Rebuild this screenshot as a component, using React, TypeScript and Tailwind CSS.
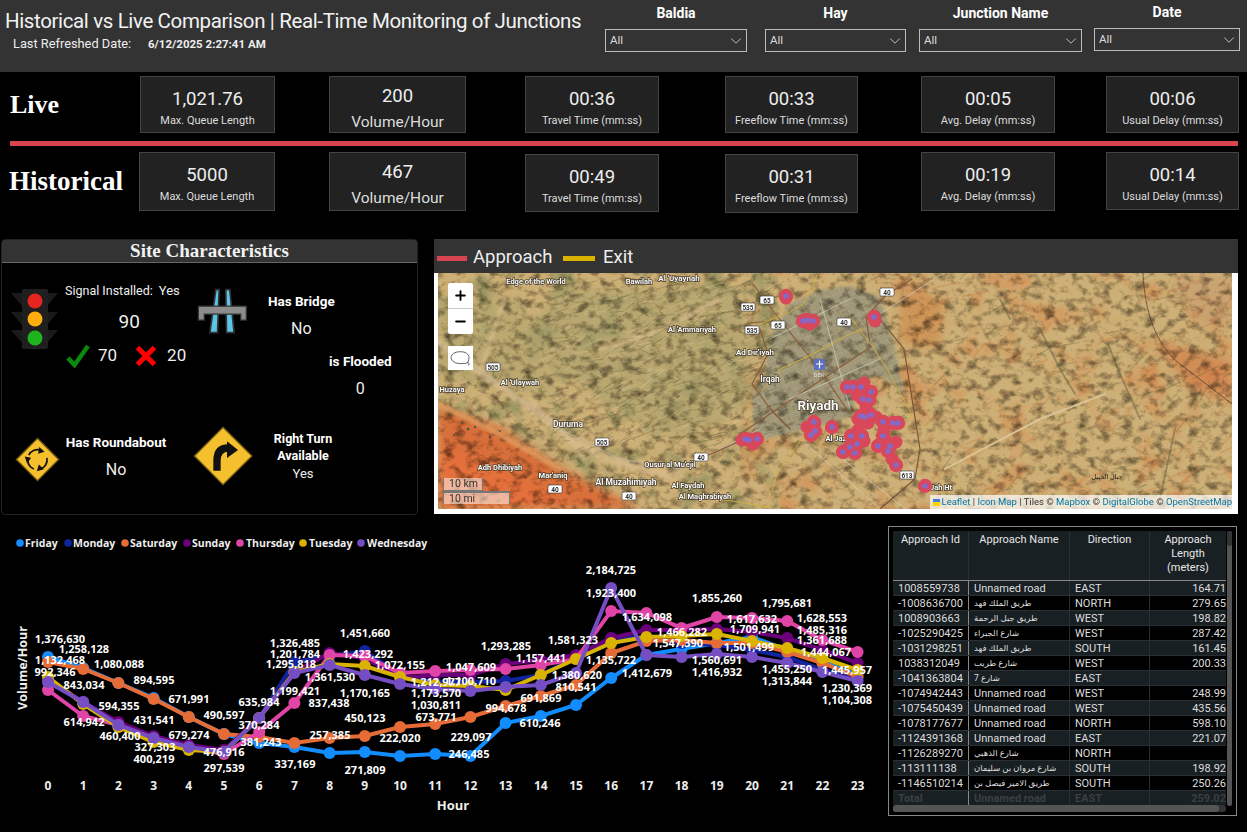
import React from 'react';
import { ChevronDown, Plus, Minus } from 'lucide-react';

const DAYS = [
  { name: 'Friday', color: '#118DFF', ys: [657, 668, 683, 698, 717, 734, 743, 747, 753, 752, 756, 754, 756, 723, 716, 705, 678, 655, 649, 643, 637, 650, 662, 675] },
  { name: 'Monday', color: '#12239E', ys: [682, 702, 725, 738, 747, 752, 718, 662, 656, 651, 675, 682, 682, 681, 675, 657, 638, 637, 643, 645, 650, 657, 670, 678] },
  { name: 'Saturday', color: '#E66C37', ys: [662, 669, 683, 699, 717, 734, 737, 743, 738, 736, 727, 724, 717, 706, 696, 685, 653, 641, 640, 643, 643, 652, 663, 677] },
  { name: 'Sunday', color: '#6B007B', ys: [680, 702, 722, 736, 745, 750, 718, 672, 653, 658, 678, 675, 675, 664, 660, 655, 638, 630, 630, 629, 632, 638, 650, 663] },
  { name: 'Thursday', color: '#E044A7', ys: [690, 716, 725, 740, 748, 754, 732, 703, 655, 656, 673, 671, 670, 669, 665, 659, 611, 613, 628, 617, 618, 621, 640, 652] },
  { name: 'Tuesday', color: '#D9B300', ys: [677, 704, 727, 742, 750, 752, 718, 672, 664, 666, 677, 685, 686, 690, 675, 659, 643, 637, 636, 634, 641, 648, 658, 670] },
  { name: 'Wednesday', color: '#744EC2', ys: [682, 702, 725, 738, 747, 752, 718, 673, 665, 675, 684, 689, 691, 687, 685, 673, 588, 655, 657, 654, 657, 663, 672, 681] },
];

const LEGEND_DOT = [20, 68, 125, 187, 240, 303, 361];
const LEGEND_TEXT = [25, 73, 130, 192, 246, 309, 367];

const LABELS: [string, number, number][] = [
  ['1,376,630', 60, 639], ['1,258,128', 84, 649], ['1,132,468', 60, 660], ['1,080,088', 119, 664], ['992,346', 55, 672],
  ['894,595', 154, 680], ['843,034', 84, 685], ['671,991', 189, 699], ['594,355', 119, 706], ['490,597', 224, 715],
  ['614,942', 84, 722], ['431,541', 154, 720], ['635,984', 259, 702], ['370,284', 259, 725], ['460,400', 120, 736],
  ['679,274', 189, 735], ['327,303', 155, 747], ['381,243', 261, 742], ['476,916', 224, 752], ['400,219', 154, 759],
  ['297,539', 224, 768], ['337,169', 295, 764], ['1,326,485', 295, 643], ['1,201,784', 295, 654], ['1,295,818', 291, 664],
  ['1,199,421', 295, 691], ['837,438', 329, 703], ['1,361,530', 330, 677], ['1,451,660', 365, 633], ['1,423,292', 368, 654],
  ['1,072,155', 400, 665], ['1,170,165', 365, 693], ['450,123', 365, 718], ['257,385', 330, 735], ['222,020', 400, 738],
  ['271,809', 365, 770], ['1,212,977', 436, 682], ['1,173,570', 436, 693], ['1,030,811', 436, 705], ['673,771', 436, 717],
  ['1,047,609', 471, 667], ['1,100,710', 471, 681], ['229,097', 471, 737], ['246,485', 469, 754], ['1,293,285', 506, 646],
  ['994,678', 506, 708], ['1,157,441', 541, 658], ['691,869', 541, 698], ['610,246', 540, 723], ['1,581,323', 573, 640],
  ['1,380,620', 577, 675], ['810,541', 576, 687], ['2,184,725', 611, 570], ['1,923,400', 611, 593], ['1,135,722', 611, 660],
  ['1,634,098', 647, 617], ['1,412,679', 647, 673], ['1,466,282', 682, 632], ['1,547,390', 678, 643], ['1,855,260', 717, 598],
  ['1,560,691', 717, 660], ['1,416,932', 717, 672], ['1,617,632', 752, 619], ['1,709,941', 755, 629], ['1,501,499', 749, 647],
  ['1,795,681', 787, 603], ['1,455,250', 787, 669], ['1,313,844', 787, 681], ['1,628,553', 822, 618], ['1,485,316', 822, 630],
  ['1,361,688', 822, 640], ['1,444,067', 826, 652], ['1,445,957', 847, 670], ['1,230,369', 847, 688], ['1,104,308', 847, 700],
];

const ROWS = [
  ['1008559738', 'Unnamed road', 'EAST', '164.71'],
  ['-1008636700', 'طريق الملك فهد', 'NORTH', '279.65'],
  ['1008903663', 'طريق جبل الرحمة', 'WEST', '198.82'],
  ['-1025290425', 'شارع الجبراء', 'WEST', '287.42'],
  ['-1031298251', 'طريق الملك فهد', 'SOUTH', '161.45'],
  ['1038312049', 'شارع طريب', 'WEST', '200.33'],
  ['-1041363804', 'شارع 7', 'EAST', ''],
  ['-1074942443', 'Unnamed road', 'WEST', '248.99'],
  ['-1075450439', 'Unnamed road', 'WEST', '435.56'],
  ['-1078177677', 'Unnamed road', 'NORTH', '598.10'],
  ['-1124391368', 'Unnamed road', 'EAST', '221.07'],
  ['-1126289270', 'شارع الذهبي', 'NORTH', ''],
  ['-113111138', 'شارع مروان بن سليمان', 'SOUTH', '198.92'],
  ['-1146510214', 'طريق الامير فيصل بن', 'SOUTH', '250.26'],
];

const MARKERS: [number, number][] = [
  [786, 297], [803, 322], [807, 321], [813, 322], [814, 423], [815, 432], [811, 436], [832, 428], [745, 440], [749, 441], [757, 440],
  [874, 318], [847, 388], [853, 388], [861, 388], [871, 393], [869, 401], [863, 400], [861, 417], [865, 418], [871, 416], [883, 423],
  [898, 424], [893, 424], [851, 437], [862, 437], [857, 445], [850, 448], [843, 453], [855, 454], [883, 437], [878, 447], [890, 447],
  [888, 452], [896, 466], [925, 487],
];

// red only, these fatten the clusters
const BLOBS: [number, number][] = [
  [858, 392], [866, 394], [864, 384], [857, 396], [866, 408], [858, 420], [876, 418], [868, 424], [858, 431], [856, 440], [864, 442],
  [852, 443], [884, 431], [886, 442], [896, 443], [892, 460], [742, 441], [753, 445], [810, 325], [875, 322], [786, 299], [807, 428],
];

const PLACES: [string, number, number, number][] = [
  ['Edge of the World', 536, 285, 7.5], ['Bawilah', 639, 285, 7.5], ["Al 'Uyaynah", 679, 282, 8], ["Al 'Ammariyah", 692, 333, 7.5],
  ["Ad Dir'iyah", 755, 356, 8], ['Irqah', 770, 383, 8.5], ["Al 'Ulaywah", 520, 386, 7.5], ['Huzaya', 452, 393, 7.5], ['Duruma', 568, 428, 8.5],
  ['Adh Dhibiyah', 500, 471, 7.5], ["Mar'aniq", 553, 479, 7.5], ['Al Muzahimiyah', 626, 486, 8.5], ['Al Faydah', 688, 489, 7.5],
  ['Al Maghrabiyah', 705, 500, 7.5], ["Qusur al Mu'ejil", 670, 468, 7.5], ['Al Jazah', 840, 442, 7.5], ['Jah Ht', 941, 491, 7.5],
];

const SHIELDS: [string, number, number][] = [
  ['535', 748, 308], ['65', 767, 301], ['535', 752, 331], ['65', 778, 326], ['505', 493, 368], ['505', 602, 443], ['40', 701, 458],
  ['40', 555, 490], ['40', 629, 497], ['40', 887, 293], ['40', 844, 323], ['613', 907, 476],
];

// deterministic drainage strokes for the terrain
const rnd = (seed: number) => {
  const v = Math.sin(seed * 127.1) * 43758.5453;
  return v - Math.floor(v);
};
const RIDGES = Array.from({ length: 420 }, (_, i) => {
  const x = 540 + rnd(i + 1) * 230;
  const y = 282 + rnd(i + 500) * 170;
  const len = 5 + rnd(i + 900) * 16;
  const a = -0.75 + rnd(i + 1300) * 0.7;
  return {
    d: `M${x.toFixed(1)} ${y.toFixed(1)}l${(Math.cos(a) * len).toFixed(1)} ${(Math.sin(a) * len).toFixed(1)}`,
    light: i % 3 === 0,
  };
});
const SPECKS = Array.from({ length: 120 }, (_, i) => ({
  x: 920 + rnd(i + 2000) * 310,
  y: 276 + rnd(i + 2400) * 232,
  w: 6 + rnd(i + 2800) * 22,
  a: -60 + rnd(i + 3200) * 50,
  dark: i % 3 === 0,
}));

const CITY = 'M773 330 L790 305 L820 291 L850 287 L880 298 L893 340 L904 395 L880 376 L862 380 L850 418 L800 432 L755 442 L752 400 L765 370 Z';

const SatelliteMap = () => (
  <svg viewBox="438 274 794 236" className="block w-full h-full" preserveAspectRatio="none">
    <defs>
      <filter id="grain" x="0" y="0" width="100%" height="100%" colorInterpolationFilters="sRGB">
        <feTurbulence type="fractalNoise" baseFrequency="0.09 0.12" numOctaves="6" seed="8" result="noise" />
        <feColorMatrix in="noise" type="matrix" values="0.85 0.85 0 0 0.1  0.85 0.85 0 0 0.09  0.85 0.85 0 0 0.07  0 0 0 0 1" result="grey" />
        <feBlend in="SourceGraphic" in2="grey" mode="multiply" />
      </filter>
      <filter id="orangePatches" x="0" y="0" width="100%" height="100%" colorInterpolationFilters="sRGB">
        <feTurbulence type="fractalNoise" baseFrequency="0.03" numOctaves="4" seed="21" />
        <feColorMatrix type="matrix" values="0 0 0 0 0.84  0 0 0 0 0.5  0 0 0 0 0.27  3.5 0 0 0 -1.8" />
      </filter>
      <filter id="olivePatches" x="0" y="0" width="100%" height="100%" colorInterpolationFilters="sRGB">
        <feTurbulence type="fractalNoise" baseFrequency="0.04" numOctaves="4" seed="5" />
        <feColorMatrix type="matrix" values="0 0 0 0 0.53  0 0 0 0 0.55  0 0 0 0 0.36  0 3.5 0 0 -1.7" />
      </filter>
      <filter id="soft"><feGaussianBlur stdDeviation="4" /></filter>
      <filter id="soft2"><feGaussianBlur stdDeviation="1.5" /></filter>
      <filter id="lens"><feGaussianBlur stdDeviation="0.35" /></filter>
      <pattern id="grid" width="8" height="7" patternUnits="userSpaceOnUse" patternTransform="rotate(-24)">
        <path d="M0 0H8M0 0V7" stroke="#d6d0c0" strokeWidth="0.45" fill="none" opacity="0.6" />
      </pattern>
    </defs>
    <g filter="url(#grain)">
      <rect x="438" y="274" width="794" height="236" fill="#CDB077" />
      <rect x="740" y="274" width="492" height="236" fill="#000" filter="url(#orangePatches)" opacity="0.55" />
      <rect x="438" y="274" width="340" height="236" fill="#000" filter="url(#olivePatches)" opacity="0.7" />
      <g filter="url(#soft)">
        <path d="M438 408 L500 428 L560 468 L640 510 L438 510 Z" fill="#D9703A" />
        <path d="M438 445 L520 475 L575 510 L438 510 Z" fill="#E4703A" />
        <path d="M560 290 L740 290 L760 400 L680 440 L600 400 L520 340 Z" fill="#ABA16E" opacity="0.6" />
        <path d="M438 300 L520 300 L560 400 L438 380 Z" fill="#B5A66F" opacity="0.7" />
        <path d="M1150 340 L1232 360 L1232 405 L1190 390 Z" fill="#D27F48" opacity="0.7" />
        <path d="M1170 276 L1232 276 L1232 330 L1195 320 Z" fill="#C9A070" opacity="0.8" />
        <path d="M900 290 L945 300 L940 350 L900 345 Z" fill="#CE8A4C" opacity="0.7" />
      </g>
      <path d={CITY} fill="#A09878" filter="url(#soft2)" />
    </g>
    <path d={CITY} fill="url(#grid)" />
    <g fill="none" strokeLinecap="round" filter="url(#lens)">
      <g filter="url(#soft2)">
        <path d="M438 342 C480 375 520 400 560 432 S640 470 680 478" stroke="#D8BC8C" strokeWidth="7" opacity="0.7" />
        <path d="M505 300 C495 325 490 345 480 372 M530 400 C550 420 570 440 585 460 M600 350 C650 340 680 320 720 300" stroke="#D8BC8C" strokeWidth="4" opacity="0.7" />
        <path d="M438 405 L490 430 L560 470" stroke="#E09A5C" strokeWidth="5" opacity="0.9" />
      </g>
      {RIDGES.map((r, i) => (
        <path key={i} d={r.d} stroke={r.light ? '#DFC896' : '#5F6039'} strokeWidth={r.light ? 0.9 : 0.8} opacity="0.42" />
      ))}
      {SPECKS.map((s, i) => (
        <rect key={i} x={s.x} y={s.y} width={s.w} height={s.dark ? 1 : 2.2} transform={`rotate(${s.a} ${s.x} ${s.y})`} fill={s.dark ? '#55603F' : '#C98048'} stroke="none" opacity="0.35" />
      ))}
      <g fill="#2F4F3C" stroke="none" opacity="0.8">
        <circle cx="468" cy="430" r="1.5" /><circle cx="475" cy="428" r="1.2" /><circle cx="462" cy="424" r="1" /><circle cx="490" cy="438" r="1.2" />
        <circle cx="454" cy="436" r="1" /><circle cx="500" cy="432" r="1" />
      </g>
      {/* highways */}
      <path d="M438 345 L500 385 L560 430 L620 460 L680 470 L760 430" stroke="#b9b3a4" strokeWidth="0.9" />
      <path d="M753 285 L770 308 L823 375 L850 415 M872 347 L830 375 L770 415 L740 435 M870 345 L866 318 L886 296 L912 280 M704 458 L745 440 M750 324 L772 322 M760 330 L768 355 L752 385 L772 412" stroke="#8a5a3c" strokeWidth="1.2" />
      <path d="M760 325 L790 313 L803 305 L812 288 L817 276 M775 378 L780 370 L807 358 L850 335 L863 330 M850 318 L873 348 L890 375 L910 412 L912 422 M772 492 L777 475 L803 438 M775 378 L762 392 M700 497 L770 508" stroke="#D4B23A" strokeWidth="0.9" />
      <path d="M805 444 L880 510 M830 450 L905 510 M880 315 L940 276 M905 460 L925 488 M770 340 L850 300 M790 400 L880 360 M820 300 L850 410" stroke="#d2cebf" strokeWidth="0.7" />
      <path d="M772 412 L790 430 M880 320 L904 350 L920 450 L915 480 L880 510" stroke="#7d5236" strokeWidth="1.2" />
      <path d="M945 470 L1040 420 L1105 395" stroke="#DCC79A" strokeWidth="2" opacity="0.9" />
      <path d="M1143 274 C1145 320 1160 350 1180 365 L1232 405" stroke="#3b3326" strokeWidth="0.7" strokeDasharray="3 1" />
      <path d="M1040 330 L1060 370 L1075 395 M1108 345 L1120 375 L1140 420 M1000 300 L1010 320 M1175 430 L1160 500" stroke="#56563A" strokeWidth="1.8" opacity="0.45" />
      <g className="font-semibold" textAnchor="middle" fill="#fff" stroke="#4a4030" strokeWidth="1.5" paintOrder="stroke">
        {PLACES.map(([t, x, y, s]) => (
          <text key={t} x={x} y={y} fontSize={s}>{t}</text>
        ))}
        <text x="818" y="411" fontSize="13.5">Riyadh</text>
      </g>
      <text x="1107" y="480" fontSize="6.5" textAnchor="middle" fill="#222" stroke="none">جبال الجبيل</text>
      {SHIELDS.map(([t, x, y], i) => (
        <g key={i}>
          <rect x={x - 7} y={y - 4} width="14" height="8" rx="1" fill="#fff" stroke="#333" strokeWidth="0.6" />
          <text x={x} y={y + 2.5} fontSize="6.5" fontWeight="700" textAnchor="middle" fill="#333" stroke="none">{t}</text>
        </g>
      ))}
      <rect x="814" y="360" width="11" height="11" rx="1" fill="#5b6fc0" stroke="none" />
      <path d="M819.5 362v7M816.5 365h6" stroke="#fff" strokeWidth="1.2" />
      <text x="819" y="378" fontSize="6" textAnchor="middle" fill="#ddd" stroke="none">DER</text>
      <g fill="#D9475A" stroke="none">
        {MARKERS.map(([x, y], i) => (
          <circle key={i} cx={x} cy={y} r="7.2" />
        ))}
        {BLOBS.map(([x, y], i) => (
          <circle key={i} cx={x} cy={y} r="6.5" />
        ))}
      </g>
      <g fill="#8469C9" stroke="none">
        {MARKERS.map(([x, y], i) => (
          <circle key={i} cx={x} cy={y} r="2.8" />
        ))}
      </g>
    </g>
  </svg>
);

const Chart = () => (
  <svg viewBox="0 525 885 307" className="block w-[885px] h-[307px] font-['Open_Sans',sans-serif]">
    {DAYS.map((d, k) => (
      <g key={d.name}>
        <circle cx={LEGEND_DOT[k]} cy="543" r="3.8" fill={d.color} />
        <text x={LEGEND_TEXT[k]} y="547" fontSize="10.5" fontWeight="700" fill="#eee">{d.name}</text>
      </g>
    ))}
    {DAYS.map((d) => (
      <g key={d.name}>
        <polyline fill="none" stroke={d.color} strokeWidth="4" points={d.ys.map((y, i) => `${48 + 35.2 * i},${y}`).join(' ')} />
        {d.ys.map((y, i) => (
          <circle key={i} cx={48 + 35.2 * i} cy={y} r="6" fill={d.color} />
        ))}
      </g>
    ))}
    {LABELS.map(([t, x, y], i) => (
      <text key={i} x={x} y={y + 4} fontSize="11" fontWeight="700" textAnchor="middle" fill="#fff">{t}</text>
    ))}
    {Array.from({ length: 24 }, (_, i) => (
      <text key={i} x={48 + 35.2 * i} y="790" fontSize="12" fontWeight="700" textAnchor="middle" fill="#eee">{i}</text>
    ))}
    <text x="453" y="810" fontSize="13" fontWeight="700" textAnchor="middle" fill="#eee">Hour</text>
    <text transform="translate(27 668) rotate(-90)" fontSize="12.5" fontWeight="700" textAnchor="middle" fill="#eee">Volume/Hour</text>
  </svg>
);

const Slicer = ({ label, boxClass, labelClass = 'mt-[5px]' }: { label: string; boxClass: string; labelClass?: string }) => (
  <div className={boxClass}>
    <div className={`text-center text-[14px] leading-[16px] font-bold text-white ${labelClass}`}>{label}</div>
    <div className="mt-[8px] h-[23px] border border-[#bbb] flex items-center justify-between pl-[4px] pr-[1px] text-[11.5px] text-[#ddd]">
      All
      <ChevronDown size={18} strokeWidth={1.1} />
    </div>
  </div>
);

const Kpi = ({ value, caption, big, box }: { value: string; caption: string; big?: boolean; box: string }) => (
  <div className={`bg-[#222] border border-[#444] flex flex-col items-center shrink-0 ${box}`}>
    <div className={`text-[18.5px] text-[#eee] leading-[24px] ${big ? 'mt-[7px]' : 'mt-[10px]'}`}>{value}</div>
    {big ? (
      <div className="mt-[4px] text-[15.5px] leading-[20px] text-[#ddd]">{caption}</div>
    ) : (
      <div className="mt-[2px] text-[11px] leading-[16px] text-[#ddd] whitespace-nowrap">{caption}</div>
    )}
  </div>
);

const TrafficLight = () => (
  <svg viewBox="0 0 47 60" className="w-[47px] h-[60px] shrink-0">
    <path d="M0 4H11V17ZM47 4H36V17ZM0 23H11V36ZM47 23H36V36ZM0 41H11V54ZM47 41H36V54Z" fill="#1a1a1a" />
    <rect x="11" y="0" width="26" height="60" rx="2" fill="#1f1f1f" />
    <circle cx="24" cy="12" r="7.5" fill="#E52521" />
    <circle cx="24" cy="30" r="7.5" fill="#FFAE0D" />
    <circle cx="24" cy="49" r="7.5" fill="#1EB41E" />
  </svg>
);

const BridgeIcon = () => (
  <svg viewBox="590 150 160 145" className="w-[53px] h-[48px] shrink-0">
    <path d="M650 158H660L655 288H632ZM680 158H692L705 288H682Z" fill="#5BC5E8" stroke="#333" strokeWidth="5" />
    <path d="M597 208H742V250H725V232H615V250H597Z" fill="#8c8c8c" stroke="#333" strokeWidth="4" />
  </svg>
);

const RoundaboutIcon = () => (
  <svg viewBox="44 606 134 134" className="w-[45px] h-[45px] shrink-0">
    <path d="M111 610L174 673L111 736L48 673Z" fill="#F5BF2E" stroke="#6b5512" strokeWidth="4" />
    <g fill="none" stroke="#111" strokeWidth="5">
      <path d="M85 660A29 29 0 0 1 122 646" />
      <path d="M139 668A29 29 0 0 1 118 702" />
      <path d="M100 701A29 29 0 0 1 82 676" />
    </g>
    <path d="M116 636L132 650L113 656ZM130 702L109 708L115 688ZM73 664L92 668L80 685Z" fill="#111" />
  </svg>
);

const TurnIcon = () => (
  <svg viewBox="578 576 180 180" className="w-[60px] h-[60px] shrink-0">
    <path d="M668 580L755 666L668 752L582 666Z" fill="#F5BF2E" stroke="#6b5512" strokeWidth="4" />
    <path d="M650 710V680Q650 642 684 642" fill="none" stroke="#111" strokeWidth="22" />
    <path d="M680 622L713 648L680 672Z" fill="#111" />
  </svg>
);

const SitePanel = () => (
  <div className="ml-[1px] w-[417px] h-[276px] border border-[#222] rounded-[4px] overflow-hidden bg-black shrink-0">
    <div className="h-[23px] bg-[#333] border-b border-[#666] text-center font-['Liberation_Serif',serif] font-bold text-[19px] leading-[22px] text-[#f2f2f2]">
      Site Characteristics
    </div>
    <div className="flex h-[160px]">
      <div className="ml-[9px] mt-[26px]"><TrafficLight /></div>
      <div className="ml-[7px] mt-[19px] w-[124px] text-[#eee]">
        <div className="text-[12.5px] leading-[18px] whitespace-nowrap">Signal Installed:<span className="ml-[6px] text-[13px]">Yes</span></div>
        <div className="mt-[10px] pl-[6px] text-center text-[19px] leading-[24px]">90</div>
        <div className="mt-[9px] flex items-center">
          <svg viewBox="0 0 26 26" className="w-[26px] h-[26px]"><path d="M3 15L9.5 22L23 3" fill="none" stroke="#0A8A0A" strokeWidth="4.5" /></svg>
          <span className="ml-[7px] text-[17px]">70</span>
          <svg viewBox="0 0 22 22" className="ml-[18px] w-[22px] h-[22px]"><path d="M2.5 2.5L19.5 19.5M19.5 2.5L2.5 19.5" stroke="#FF0000" strokeWidth="5" /></svg>
          <span className="ml-[10px] text-[17px]">20</span>
        </div>
      </div>
      <div className="ml-[9px] mt-[24px]"><BridgeIcon /></div>
      <div className="w-[170px] text-white">
        <div className="w-[104px] text-center mt-[28px] text-[13.5px] leading-[20px] font-bold">Has Bridge</div>
        <div className="w-[104px] text-center mt-[8px] text-[16px] leading-[20px] text-[#eee]">No</div>
        <div className="ml-[59px] w-[104px] text-center mt-[12px] text-[13.5px] leading-[20px] font-bold">is Flooded</div>
        <div className="ml-[59px] w-[104px] text-center mt-[8px] text-[16px] leading-[20px] text-[#eee]">0</div>
      </div>
    </div>
    <div className="flex text-white">
      <div className="ml-[13px] mt-[14px]"><RoundaboutIcon /></div>
      <div className="w-[112px] mt-[9px]">
        <div className="text-center text-[13.5px] leading-[20px] font-bold whitespace-nowrap">Has Roundabout</div>
        <div className="text-center mt-[8px] text-[16px] leading-[20px] text-[#eee]">No</div>
      </div>
      <div className="ml-[21px] mt-[3px]"><TurnIcon /></div>
      <div className="w-[100px] mt-[7px] text-center">
        <div className="text-[12.5px] leading-[17px] font-bold">Right Turn</div>
        <div className="text-[12.5px] leading-[17px] font-bold">Available</div>
        <div className="mt-[1px] text-[13px] leading-[18px] text-[#eee]">Yes</div>
      </div>
    </div>
  </div>
);

const MapPanel = () => (
  <div className="ml-[16px] w-[804px] h-[275px] bg-white flex flex-col shrink-0 relative">
    <div className="h-[34px] bg-[#333] flex items-center pt-[4px] text-[18.5px] text-[#eee] shrink-0">
      <span className="ml-[3px] w-[30px] h-[5px] bg-[#D64550]" />
      <span className="ml-[6px] w-[76px] whitespace-nowrap">Approach</span>
      <span className="ml-[14px] w-[32px] h-[5px] bg-[#D9B300]" />
      <span className="ml-[8px]">Exit</span>
    </div>
    <div className="ml-[4px] mr-[6px] h-[236px] relative overflow-hidden">
      <SatelliteMap />
      <div className="absolute left-[10px] top-[10px] w-[25px] h-[51px] bg-white flex flex-col items-center text-black rounded-[2px]">
        <div className="h-[25px] flex items-center"><Plus size={15} strokeWidth={3} /></div>
        <div className="w-full border-t border-[#ccc]" />
        <div className="h-[25px] flex items-center"><Minus size={15} strokeWidth={3} /></div>
      </div>
      <div className="absolute left-[10px] top-[73px] w-[25px] h-[24px] bg-white flex items-center justify-center">
        <svg viewBox="0 0 24 20" className="w-[21px] h-[17px]"><path d="M12 2C5 2 1 5 1 9s5 7 11 7c3 0 6 0 8-1s3 3 1 3M12 2c6 0 10 3 10 7 0 3-1 5-2 6" fill="none" stroke="#444" strokeWidth="1" /></svg>
      </div>
      <div className="absolute left-[5px] top-[205px] w-[40px] h-[13px] bg-white/50 border-x border-b border-[#777] text-[10.5px] leading-[12px] pl-[5px] text-[#333]">10 km</div>
      <div className="absolute left-[5px] top-[218px] w-[67px] h-[13px] bg-white/50 border-x border-t-2 border-[#777] text-[10.5px] leading-[11px] pl-[5px] text-[#333]">10 mi</div>
      <div className="absolute right-0 bottom-0 h-[14px] w-[302px] bg-white/70 text-[9.5px] leading-[14px] pl-[3px] text-[#333] whitespace-nowrap flex items-center">
        <span className="mr-[2px] w-[10px] h-[7px] bg-[linear-gradient(#4C7BE1_50%,#FFD500_50%)]" />
        <span className="text-[#0078A8]">Leaflet</span>&nbsp;|&nbsp;<span className="text-[#0078A8]">Icon Map</span>&nbsp;| Tiles ©&nbsp;<span className="text-[#0078A8]">Mapbox</span>&nbsp;©&nbsp;<span className="text-[#0078A8]">DigitalGlobe</span>&nbsp;©&nbsp;<span className="text-[#0078A8]">OpenStreetMap</span>
      </div>
    </div>
  </div>
);

const DataTable = () => (
  <div className="mt-[1px] ml-[3px] w-[349px] h-[290px] border border-[#888] p-[4px] relative shrink-0">
    <div className="w-[333px] h-[274px] overflow-hidden text-[11px] text-[#ddd]">
      <div className="flex h-[50px] bg-[#192024] border-b border-[#888] text-center leading-[14px] text-[#e6e6e6]">
        <div className="w-[76px] pt-[2px] border-r border-[#2a3034]">Approach Id</div>
        <div className="w-[101px] pt-[2px] border-r border-[#2a3034]">Approach Name</div>
        <div className="w-[80px] pt-[2px] border-r border-[#2a3034]">Direction</div>
        <div className="w-[76px] pt-[2px]">Approach<br />Length<br />(meters)</div>
      </div>
      {ROWS.map((r, i) => (
        <div key={r[0]} className={`flex h-[15px] leading-[15px] border-b border-[#2a3034] whitespace-nowrap ${i % 2 ? 'bg-black' : 'bg-[#192024]'}`}>
          <div className="w-[76px] pl-[5px] border-r border-[#888]">{r[0]}</div>
          <div className={`w-[101px] pl-[5px] border-r border-[#2a3034] overflow-hidden ${r[1] === 'Unnamed road' ? '' : 'text-[8.5px]'}`}>{r[1]}</div>
          <div className="w-[80px] pl-[5px] border-r border-[#2a3034]">{r[2]}</div>
          <div className="w-[76px] text-right">{r[3]}</div>
        </div>
      ))}
      <div className="flex h-[15px] leading-[15px] bg-[#192024] font-bold text-[#3a3f42] whitespace-nowrap">
        <div className="w-[76px] pl-[5px] border-r border-[#888]">Total</div>
        <div className="w-[101px] pl-[5px] border-r border-[#2a3034]">Unnamed road</div>
        <div className="w-[80px] pl-[5px] border-r border-[#2a3034]">EAST</div>
        <div className="w-[76px] text-right">259.02</div>
      </div>
    </div>
    <div className="absolute left-[338px] top-[4px] w-[5px] h-[275px] bg-[#555] rounded-[3px]">
      <div className="w-[5px] h-[15px] bg-[#333] rounded-[3px]" />
    </div>
    <div className="absolute left-[4px] top-[278px] w-[333px] h-[7px] bg-[#333] rounded-[3px]">
      <div className="w-[326px] h-[7px] bg-[#555] rounded-[3px]" />
    </div>
  </div>
);

export default function App() {
  return (
    <div className="w-[1247px] h-[832px] bg-black overflow-hidden font-['Roboto','DejaVu_Sans',sans-serif]">
      {/* Header */}
      <div className="h-[72px] bg-[#333] flex">
        <div className="w-[605px] pl-[5px] pt-[7px] shrink-0">
          <div className="text-[20.5px] tracking-[-0.37px] leading-[28px] text-[#f2f2f2] whitespace-nowrap">Historical vs Live Comparison | Real-Time Monitoring of Junctions</div>
          <div className="flex ml-[8px] mt-[1px] text-[12.8px] leading-[16px] text-[#eee]">
            <span className="w-[135px]">Last Refreshed Date:</span>
            <span className="font-bold text-[11.5px]">6/12/2025 2:27:41 AM</span>
          </div>
        </div>
        <Slicer label="Baldia" boxClass="w-[142px] shrink-0" />
        <Slicer label="Hay" boxClass="ml-[18px] w-[141px] shrink-0" />
        <Slicer label="Junction Name" boxClass="ml-[13px] w-[163px] shrink-0" />
        <Slicer label="Date" boxClass="ml-[12px] w-[146px] shrink-0" labelClass="mt-[4px]" />
      </div>

      {/* Live row */}
      <div className="flex h-[57px] mt-[4px] items-start">
        <div className="w-[140px] pl-[10px] shrink-0 font-['Liberation_Serif',serif] font-bold text-[26px] leading-[58px] text-white">Live</div>
        <Kpi value="1,021.76" caption="Max. Queue Length" box="w-[135px] h-[57px]" />
        <Kpi value="200" caption="Volume/Hour" big box="ml-[54px] w-[137px] h-[57px]" />
        <Kpi value="00:36" caption="Travel Time (mm:ss)" box="ml-[59px] w-[134px] h-[57px]" />
        <Kpi value="00:33" caption="Freeflow Time (mm:ss)" box="ml-[66px] w-[133px] h-[57px]" />
        <Kpi value="00:05" caption="Avg. Delay (mm:ss)" box="ml-[63px] w-[134px] h-[57px]" />
        <Kpi value="00:06" caption="Usual Delay (mm:ss)" box="ml-[51px] w-[133px] h-[57px]" />
      </div>

      <div className="ml-[10px] mt-[8px] w-[1228px] h-[5px] bg-[#D64550]" />

      {/* Historical row */}
      <div className="flex h-[61px] mt-[6px] items-start">
        <div className="w-[139px] pl-[9px] shrink-0 font-['Liberation_Serif',serif] font-bold text-[27px] leading-[58px] text-white whitespace-nowrap">Historical</div>
        <Kpi value="5000" caption="Max. Queue Length" box="w-[136px] h-[59px]" />
        <Kpi value="467" caption="Volume/Hour" big box="ml-[54px] w-[137px] h-[59px]" />
        <Kpi value="00:49" caption="Travel Time (mm:ss)" box="ml-[59px] mt-[2px] w-[134px] h-[58px]" />
        <Kpi value="00:31" caption="Freeflow Time (mm:ss)" box="ml-[66px] mt-[2px] w-[133px] h-[59px]" />
        <Kpi value="00:19" caption="Avg. Delay (mm:ss)" box="ml-[63px] w-[134px] h-[59px]" />
        <Kpi value="00:14" caption="Usual Delay (mm:ss)" box="ml-[51px] w-[133px] h-[58px]" />
      </div>

      {/* Middle */}
      <div className="flex mt-[26px] h-[276px]">
        <SitePanel />
        <MapPanel />
      </div>

      {/* Bottom */}
      <div className="flex mt-[10px]">
        <Chart />
        <DataTable />
      </div>
    </div>
  );
}
